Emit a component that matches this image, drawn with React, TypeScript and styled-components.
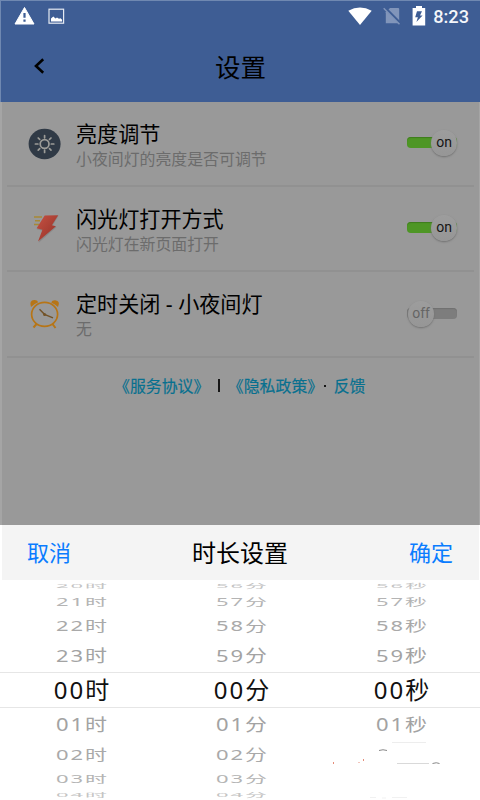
import React from 'react';
import styled, { createGlobalStyle } from 'styled-components';

const GlobalStyle = createGlobalStyle`
  * { box-sizing: border-box; }
  html, body { margin: 0; padding: 0; }
  body { font-family: "Noto Sans", "Noto Sans CJK SC", sans-serif; background: #fff; }
`;

const Screen = styled.div`
  width: 480px;
  height: 800px;
  overflow: hidden;
  display: flex;
  flex-direction: column;
  background: #fff;
`;

const Header = styled.header`
  height: 102px;
  flex: none;
  background: #3e5d94;
  border-top: 1px solid #6f88b1;
  border-left: 1px solid #6f88b1;
`;

const StatusBar = styled.div`
  height: 31px;
  display: flex;
  justify-content: space-between;
  padding: 5px 11px 0 13px;
`;

const StatusGroup = styled.div<{ $gap: number }>`
  display: flex;
  align-items: flex-start;
  gap: ${(p) => p.$gap}px;
`;

const Clock = styled.span`
  font: 500 18.2px/22px Roboto, sans-serif;
  color: #f4f6fa;
  margin-left: -4px;
`;

const TitleBar = styled.div`
  height: 70px;
  display: grid;
  grid-template-columns: 80px 1fr 80px;
  align-items: center;
`;

const BackButton = styled.button`
  border: 0;
  padding: 0 0 2px 32px;
  background: none;
  text-align: left;
  line-height: 0;
`;

const Title = styled.h1`
  margin: 0;
  font-size: 25.5px;
  line-height: 36px;
  font-weight: 400;
  text-align: center;
  color: #000;
`;

const Content = styled.main`
  height: 423px;
  flex: none;
  background: #999;
  border-left: 2px solid #a5a5a5;
  border-right: 1px solid #a5a5a5;
  padding: 0 5px;
`;

const SettingRow = styled.section`
  height: 85.2px;
  display: grid;
  grid-template-columns: 70px 1fr 67px;
  border-bottom: 2px solid #919191;
`;

const IconCell = styled.div`
  padding: 25px 0 0 20px;
  line-height: 0;
`;

const SettingText = styled.div`
  padding-top: 18px;
  margin-left: -1px;
  white-space: nowrap;
`;

const SettingName = styled.div`
  font-size: 21.1px;
  line-height: 27px;
  color: #000;
`;

const SettingNote = styled.div`
  font-size: 15.9px;
  line-height: 25px;
  color: #6c6c6c;
`;

const SwitchTrack = styled.div<{ $on: boolean }>`
  width: 50px;
  height: 11px;
  margin-top: ${(p) => (p.$on ? 35 : 36)}px;
  padding-left: ${(p) => (p.$on ? 0 : 1)}px;
  border-radius: 4px;
  display: flex;
  align-items: center;
  justify-content: ${(p) => (p.$on ? 'flex-end' : 'flex-start')};
  background: ${(p) => (p.$on ? '#4e9625' : '#7d7d7d')};
  box-shadow: inset 0 1px 1px ${(p) => (p.$on ? '#3f7c1d' : '#717171')};
`;

const SwitchKnob = styled.span<{ $on: boolean }>`
  flex: none;
  width: 26px;
  height: 26px;
  border-radius: 50%;
  background: linear-gradient(#9d9d9d, #969696);
  box-shadow: 0 1px 2px #707070;
  font: 14px/25px Roboto, sans-serif;
  text-align: center;
  color: ${(p) => (p.$on ? '#151515' : '#656565')};
`;

const Links = styled.nav`
  display: flex;
  align-items: center;
  height: 56px;
  padding-left: 107px;
  font-size: 15.9px;
  line-height: 24px;
  white-space: nowrap;
  color: #111;
`;

const Link = styled.a`
  color: #08708f;
  -webkit-text-stroke: 0.2px #08708f;
`;

const Bar = styled.span`
  width: 1.5px;
  height: 13px;
  margin: 0 8px 0 9px;
  background: #171717;
`;

const Dot = styled.span`
  width: 2px;
  height: 2px;
  margin: 0 7.5px 0 1px;
  background: #171717;
`;

const SheetHeader = styled.div`
  height: 55px;
  flex: none;
  margin: 0 1px 0 2px;
  padding: 0 26px 0 25px;
  display: flex;
  justify-content: space-between;
  align-items: center;
  background: #f4f4f4;
`;

const SheetAction = styled.button`
  border: 0;
  padding: 0 0 3px;
  background: none;
  font: 22px/32px "Noto Sans CJK SC", sans-serif;
  color: #0a7cff;
`;

const SheetTitle = styled.h2`
  margin: 0;
  font-size: 24px;
  line-height: 32px;
  font-weight: 400;
  color: #000;
`;

const Wheels = styled.div`
  height: 220px;
  display: grid;
  grid-template-columns: repeat(3, 160px);
`;

const Wheel = styled.div`
  display: flex;
  flex-direction: column;
`;

const Slot = styled.div<{ $h: number; $selected: boolean }>`
  height: ${(p) => p.$h}px;
  flex: none;
  display: flex;
  align-items: center;
  justify-content: center;
  padding-left: 5px;
  border: solid #e6e6e6;
  border-width: ${(p) => (p.$selected ? '1px 0' : '0')};
`;

const Value = styled.span<{ $scale: number; $color: string; $selected: boolean }>`
  display: block;
  white-space: nowrap;
  line-height: ${(p) => (p.$selected ? 30 : 28)}px;
  padding-bottom: ${(p) => (p.$selected ? 0 : 2)}px;
  font-size: ${(p) => (p.$selected ? 24 : 22)}px;
  letter-spacing: 2px;
  color: ${(p) => p.$color};
  transform: scaleY(${(p) => p.$scale});
`;

const Fragments = styled.svg`
  display: block;
  width: 160px;
  height: 58px;
`;

const Warning = () => (
  <svg width="21" height="19" viewBox="0 0 21 19">
    <path d="M10.5 1.5 20 18H1Z" fill="#fff" stroke="#fff" strokeLinejoin="round" />
    <path d="M10.500 7v4.800M10.500 13.500v2.300" stroke="#3e5d94" strokeWidth="2.2" />
  </svg>
);

const Picture = () => (
  <svg width="17" height="19" viewBox="0 -1.500 17 19">
    <rect x="1" y="1.700" width="14.600" height="14" fill="none" stroke="#e5eaf2" strokeWidth="1.200" />
    <path d="M3 14v-3l2.300-2 2.200 2 1.500-1 2 1.200 1.500-.500 1.600 1.600V14Z" fill="#fff" />
  </svg>
);

const Wifi = () => (
  <svg width="24" height="20" viewBox="0 -0.500 24 20">
    <path d="M.3 4.300Q12-2.500 23.700 4.300L12 18.600Z" fill="#fff" />
  </svg>
);

const NoSim = () => (
  <svg width="18" height="19" viewBox="0 0 18 19">
    <path d="M7 2h8.200q1 0 1 1v14.300H2.800V6.300Z" fill="#8195ba" />
    <path d="m1.500 1.500 16 16" stroke="#3e5d94" strokeWidth="3" />
    <path d="m.7 2.200 15.800 16" stroke="#8195ba" strokeWidth="1.500" />
  </svg>
);

const Battery = () => (
  <svg width="14" height="20" viewBox="0 0 14 20">
    <path d="M4 0h6v2h3.200v17.500H.6V2H4Z" fill="#fff" />
    <path d="M5 5.200h5L8 9.500h2.600L4.400 16l1.500-4.700H3.200Z" fill="#3e5d94" />
  </svg>
);

const Back = () => (
  <svg width="12" height="16" viewBox="0 0 12 16">
    <path d="M10.200 1.300 3 8l7.200 6.700" fill="none" stroke="#000" strokeWidth="2.600" />
  </svg>
);

const Sun = () => (
  <svg width="36" height="34" viewBox="0 0 36 34">
    <ellipse cx="17.600" cy="17" rx="16" ry="15.200" fill="#303a46" />
    <g stroke="#9c9c98" strokeWidth="1.700" strokeLinecap="round" fill="none">
      <circle cx="17.600" cy="17" r="4.400" />
      <path d="M17.600 8.500v2.300M17.600 23.200v2.300M8.400 17h2.500M24.300 17h2.500M11.200 11l1.500 1.400M22.500 21.600l1.500 1.500M24 11l-1.500 1.400M12.700 21.600l-1.500 1.500" />
    </g>
  </svg>
);

const Lightning = () => (
  <svg width="36" height="34" viewBox="0 0 36 34">
    <defs>
      <linearGradient id="bolt" x1="0" y1="0" x2="1" y2="1">
        <stop offset="0" stopColor="#c65143" />
        <stop offset="1" stopColor="#913026" />
      </linearGradient>
    </defs>
    <path d="M7 5h8M8 8.800h5M7 12.600h5" stroke="#a88935" strokeWidth="1.500" />
    <path d="m18 4.500 13.500-.7-6 10 4 1.200-17.800 15.700 4.200-12-6-1.500Z" fill="#777" opacity=".5" />
    <path d="m17.700 3.500 13.500-.2-6.300 10 4 1L11 29.500l4.400-11.800-5.800-1.400Z" fill="url(#bolt)" />
  </svg>
);

const Alarm = () => (
  <svg width="36" height="35" viewBox="0 -1.500 36 35">
    <g fill="#b77516">
      <path d="M4 8.500Q1.800 2 7.200 1.600q3-.2 4 2.200Q7 5.500 4 8.500Z" />
      <path d="M31 8.500Q33.800 2.500 28.200 1.700q-3-.3-4 2.200Q28 5.500 31 8.500Z" />
    </g>
    <g fill="none" stroke="#b77516" strokeWidth="1.700">
      <ellipse cx="17.600" cy="15.800" rx="13" ry="12" />
      <path d="m9.500 25.500-3 3.500M25.500 25.500l3 4" strokeWidth="2" />
      <path d="m12.500 10.800 5 5 8.500 3.500" stroke="#735328" strokeWidth="1.400" />
    </g>
    <circle cx="17.600" cy="15.900" r="1.500" fill="#735328" />
  </svg>
);

const settings = [
  { name: '亮度调节', note: '小夜间灯的亮度是否可调节', on: true, icon: <Sun /> },
  { name: '闪光灯打开方式', note: '闪光灯在新页面打开', on: true, icon: <Lightning /> },
  { name: '定时关闭 - 小夜间灯', note: '无', on: false, icon: <Alarm /> },
];

const slots = [
  { h: 11, scale: 0.24, color: '#c4c4c4' },
  { h: 21, scale: 0.46, color: '#b4b4b4' },
  { h: 27, scale: 0.63, color: '#a9a9a9' },
  { h: 33, scale: 0.76, color: '#a3a3a3' },
  { h: 36, scale: 1, color: '#111' },
  { h: 33, scale: 0.79, color: '#a3a3a3' },
  { h: 27, scale: 0.67, color: '#a9a9a9' },
  { h: 22, scale: 0.46, color: '#b4b4b4' },
  { h: 10, scale: 0.26, color: '#c4c4c4' },
];

const wheels = [
  { unit: '时', values: ['20', '21', '22', '23', '00', '01', '02', '03', '04'] },
  { unit: '分', values: ['56', '57', '58', '59', '00', '01', '02', '03', '04'] },
  { unit: '秒', values: ['56', '57', '58', '59', '00', '01'] },
];

/* Partly erased lower end of the seconds wheel. */
const ErasedEnd = () => (
  <Fragments viewBox="0 0 160 58">
    <path d="M72 1.500h34" stroke="#ededed" />
    <path d="M59 9.500q4-1.500 8 0" stroke="#888" fill="none" />
    <path d="M77 22.500h32" stroke="#d9d9d9" />
    <path d="M112.500 22.500q4-1.500 7 0" stroke="#888" fill="none" />
    <path d="M13.500 21v2M43.500 18v2M39 21v1" stroke="#e58b78" />
    <path d="M50 56.500h6M62 57h4M72 56.500h15" stroke="#f1f1f1" />
  </Fragments>
);

export default function App() {
  return (
    <Screen>
      <GlobalStyle />
      <Header>
        <StatusBar>
          <StatusGroup $gap={13}>
            <Warning />
            <Picture />
          </StatusGroup>
          <StatusGroup $gap={11}>
            <Wifi />
            <NoSim />
            <Battery />
            <Clock>8:23</Clock>
          </StatusGroup>
        </StatusBar>
        <TitleBar>
          <BackButton aria-label="返回"><Back /></BackButton>
          <Title>设置</Title>
        </TitleBar>
      </Header>
      <Content>
        {settings.map((s) => (
          <SettingRow key={s.name}>
            <IconCell>{s.icon}</IconCell>
            <SettingText>
              <SettingName>{s.name}</SettingName>
              <SettingNote>{s.note}</SettingNote>
            </SettingText>
            <SwitchTrack $on={s.on}>
              <SwitchKnob $on={s.on}>{s.on ? 'on' : 'off'}</SwitchKnob>
            </SwitchTrack>
          </SettingRow>
        ))}
        <Links>
          <Link>《服务协议》</Link>
          <Bar />
          <Link>《隐私政策》</Link>
          <Dot />
          <Link>反馈</Link>
        </Links>
      </Content>
      <SheetHeader>
        <SheetAction>取消</SheetAction>
        <SheetTitle>时长设置</SheetTitle>
        <SheetAction>确定</SheetAction>
      </SheetHeader>
      <Wheels>
        {wheels.map((w) => (
          <Wheel key={w.unit}>
            {w.values.map((v, i) => (
              <Slot key={v} $h={slots[i].h} $selected={i === 4}>
                <Value $scale={slots[i].scale} $color={slots[i].color} $selected={i === 4}>
                  {v}{w.unit}
                </Value>
              </Slot>
            ))}
            {w.unit === '秒' && <ErasedEnd />}
          </Wheel>
        ))}
      </Wheels>
    </Screen>
  );
}
